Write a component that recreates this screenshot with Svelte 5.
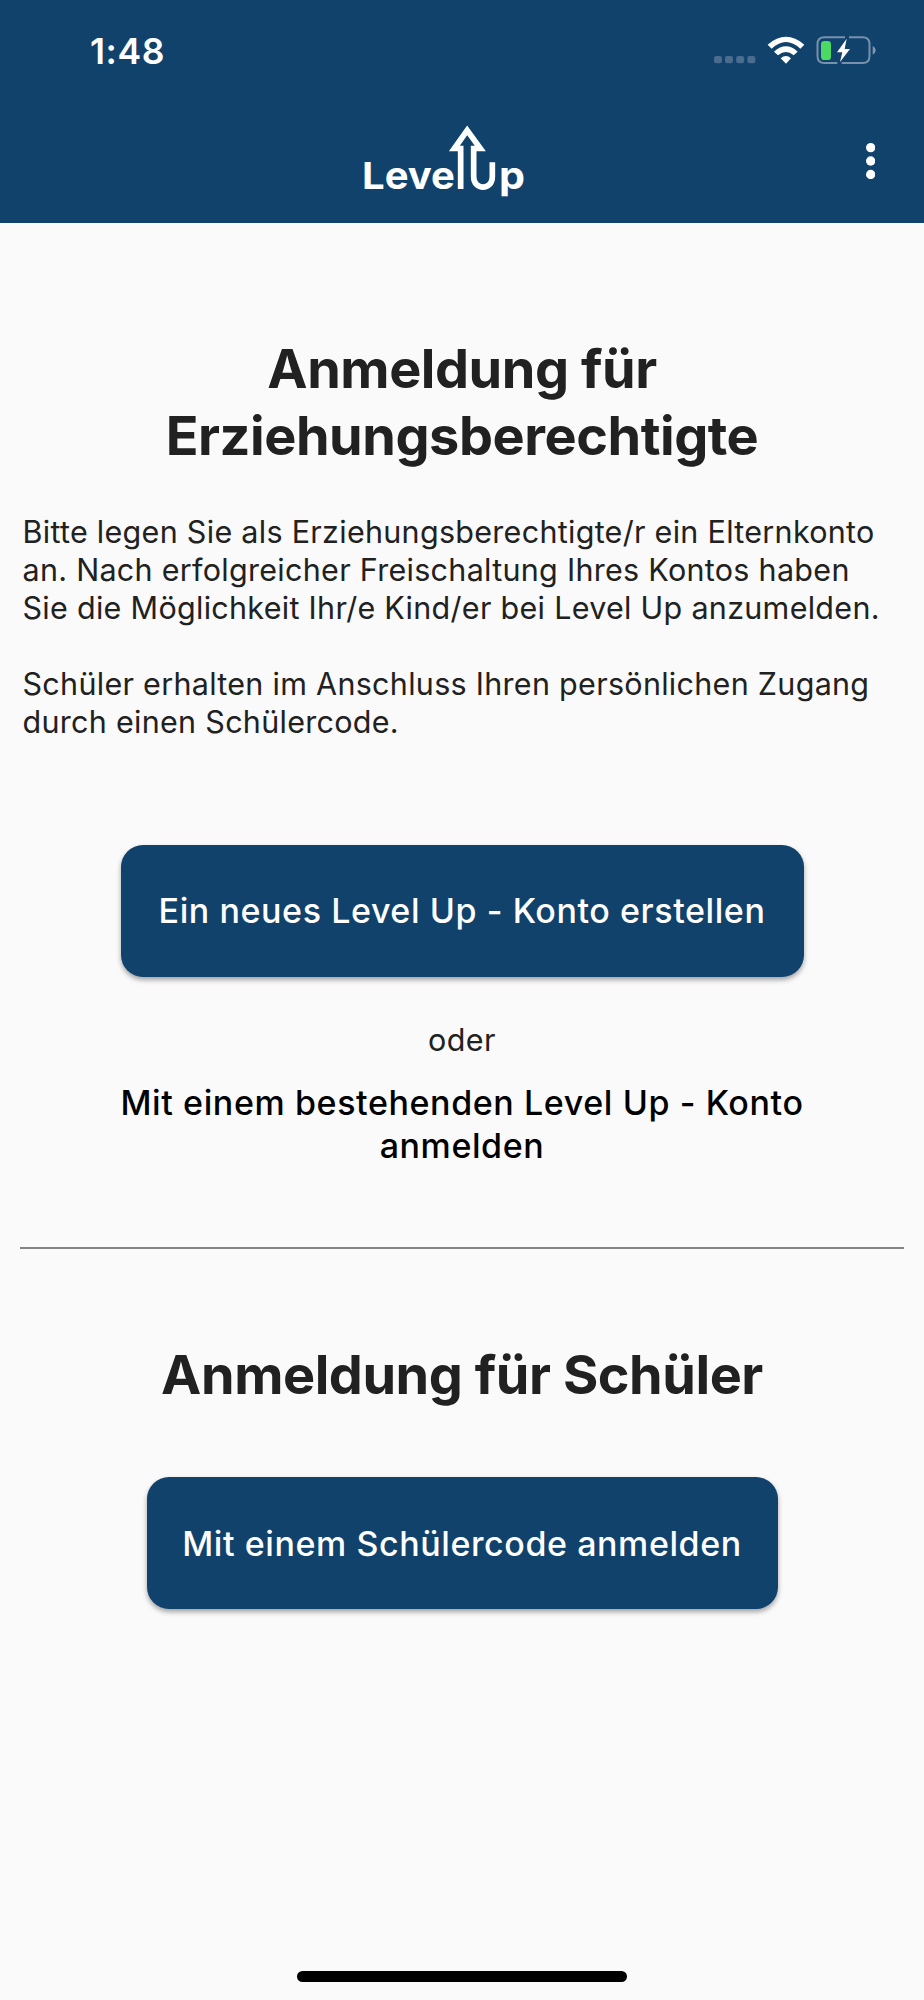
<script>
	const signalDots = [72, 105, 138.5, 172];
	const menuDots = [14, 54, 94.5];
</script>

<div class="screen">
	<header>
		<div class="status-bar">
			<span class="time">1:48</span>
			<svg class="status-icons" viewBox="0 0 702 210" width="234" height="70">
				{#each signalDots as x}
					<rect {x} y="108" width="24" height="22" rx="7" fill="#4a6c8e" />
				{/each}

				<!-- wifi -->
				<g fill="#fff">
					<path d="M233 74 Q288 27 343 74 L331 86 Q288 46 245 86 Z" />
					<path d="M252 95 Q288 63 323 95 L311 106 Q288 86 264 106 Z" />
					<path d="M272 115 Q288 101 303 115 L288 131 Z" />
				</g>

				<!-- battery -->
				<path d="M465 51.5 H403 Q382.5 51.5 382.5 72 V108 Q382.5 129 403 129 H442 M477 51.5 H518 Q538.5 51.5 538.5 72 V108 Q538.5 129 518 129 H455" fill="none" stroke="#7890aa" stroke-width="6" />
				<path d="M548 77 Q557 83 557 91 Q557 99 548 104 Z" fill="#8297ae" />
				<rect x="393" y="63" width="30" height="57" rx="10" fill="#4cd964" />
				<path d="M470 56 L441 97 H457 L450 126 L480 87 H464 Z" fill="#fff" />
			</svg>
		</div>

		<div class="app-bar">
			<svg class="logo" viewBox="0 0 630 300" width="210" height="100">
				<text x="66" y="237" textLength="279" lengthAdjust="spacingAndGlyphs">Leve</text>
				<path d="M362 237 V115.5 H343 L381.5 61 L421 115.5 H401 V200 C401 242 457 242 457 200 V157" fill="none" stroke="#fff" stroke-width="17" stroke-miterlimit="10" />
				<text x="477" y="237" textLength="78" lengthAdjust="spacingAndGlyphs">p</text>
			</svg>
			<button class="menu" aria-label="Menü">
				<svg viewBox="0 0 28 109" width="9.333" height="36.333">
					{#each menuDots as cy}
						<circle cx="14" {cy} r="14" fill="#fff" />
					{/each}
				</svg>
			</button>
		</div>
	</header>

	<main>
		<section class="parents">
			<h1>Anmeldung für<br />Erziehungsberechtigte</h1>
			<p class="intro">
				Bitte legen Sie als Erziehungsberechtigte/r ein Elternkonto<br />
				an. Nach erfolgreicher Freischaltung Ihres Kontos haben<br />
				Sie die Möglichkeit Ihr/e Kind/er bei Level Up anzumelden.
			</p>
			<p class="intro">
				Schüler erhalten im Anschluss Ihren persönlichen Zugang<br />
				durch einen Schülercode.
			</p>
			<button class="primary create">Ein neues Level Up - Konto erstellen</button>
			<p class="or">oder</p>
			<button class="link">Mit einem bestehenden Level Up - Konto<br />anmelden</button>
		</section>

		<hr />

		<section class="students">
			<h1>Anmeldung für Schüler</h1>
			<button class="primary code">Mit einem Schülercode anmelden</button>
		</section>
	</main>

	<div class="home-indicator"></div>
</div>

<style>
	:global(body) {
		background: #fafafa;
	}

	.screen {
		height: 2000px;
		display: flex;
		flex-direction: column;
		background: #fafafa;
		color: #212121;
		font-family: Inter, "Liberation Sans", sans-serif;
		overflow: hidden;
	}

	header {
		height: 223px;
		flex: none;
		background: #11426c;
		color: #fff;
	}

	.status-bar {
		height: 110px;
		display: flex;
		justify-content: space-between;
	}
	.time {
		padding: 31px 0 0 90px;
		font-size: 35.5px;
		font-weight: 600;
		line-height: 42px;
		letter-spacing: 0.6px;
	}
	.status-icons {
		margin-top: 20px;
	}

	.app-bar {
		display: flex;
		justify-content: space-between;
		align-items: flex-start;
		padding: 0 49px 0 340px;
	}
	.logo text {
		fill: #fff;
		font-size: 112px;
		font-weight: 700;
	}

	button {
		font: inherit;
		border: 0;
		padding: 0;
		background: none;
		white-space: nowrap;
	}
	.menu {
		margin-top: 32.5px;
		display: flex;
	}

	section {
		display: flex;
		flex-direction: column;
		align-items: center;
	}
	h1 {
		margin: 0;
		font-size: 54px;
		font-weight: 700;
		line-height: 67px;
		letter-spacing: -0.45px;
		text-align: center;
		white-space: nowrap;
	}
	.parents {
		padding-top: 112px;
	}

	.intro {
		align-self: flex-start;
		margin: 0 0 38px 22.5px;
		font-size: 30.5px;
		line-height: 38px;
		letter-spacing: 0.29px;
		white-space: nowrap;
	}
	h1 + .intro {
		margin-top: 43.5px;
	}

	.primary {
		height: 132px;
		border-radius: 22px;
		background: #11426c;
		color: #fff;
		font-size: 34px;
		font-weight: 500;
		letter-spacing: 0.58px;
		box-shadow: 0 3px 5px rgba(0, 0, 0, 0.35);
	}
	.create {
		width: 683px;
		margin-top: 66px;
	}
	.or {
		margin: 44px 0 23.5px;
		font-size: 30.5px;
		line-height: 38px;
		letter-spacing: 0.5px;
	}
	.link {
		color: #000;
		font-size: 34px;
		font-weight: 500;
		line-height: 42.5px;
		letter-spacing: 0.6px;
	}

	hr {
		height: 2px;
		margin: 80px 20px 92px;
		border: 0;
		background: #848484;
	}

	.code {
		width: 631px;
		margin-top: 69px;
	}

	.home-indicator {
		width: 330px;
		height: 11px;
		margin: auto auto 18px;
		border-radius: 6px;
		background: #000;
	}
</style>
